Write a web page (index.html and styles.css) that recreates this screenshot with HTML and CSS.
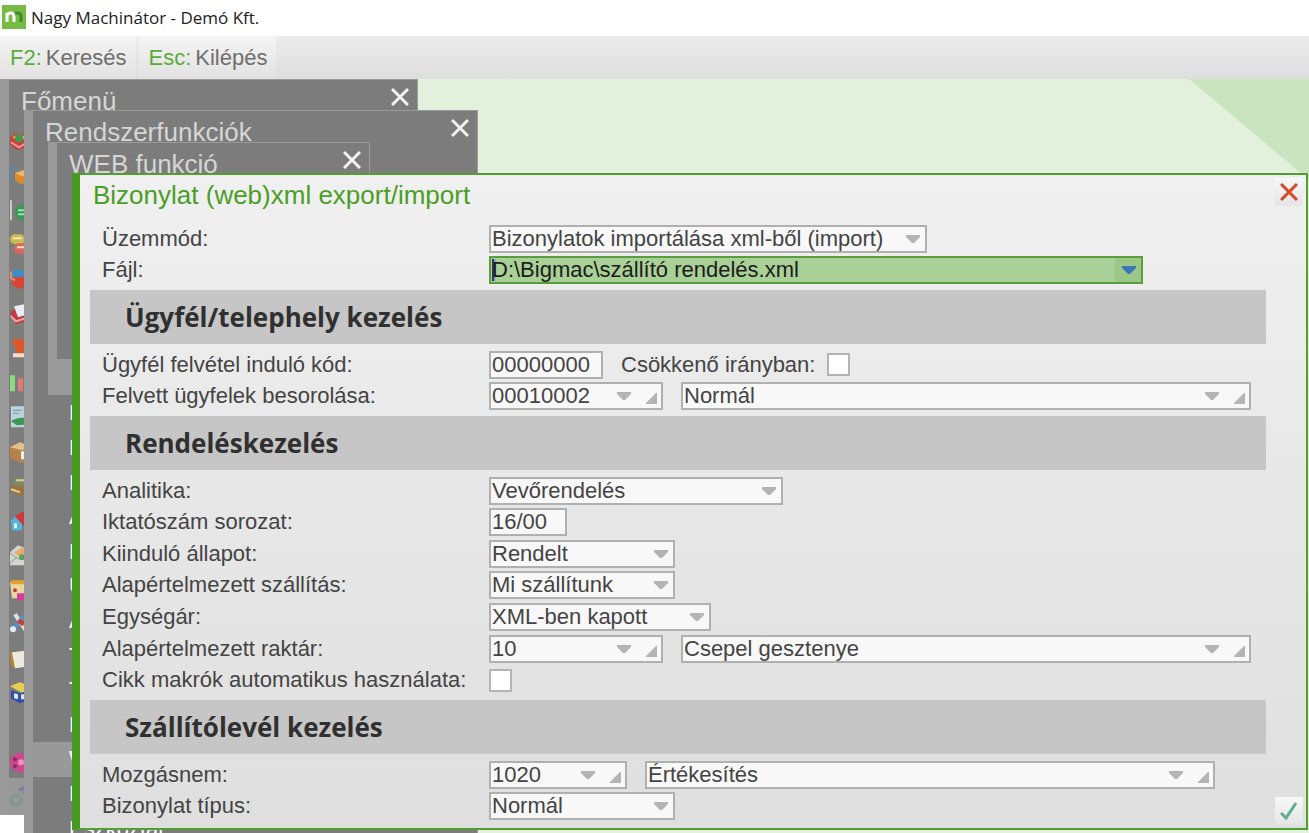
FILE: index.html
```html
<!DOCTYPE html>
<html lang="hu">
<head>
    <meta charset="UTF-8">
    <meta name="viewport" content="width=device-width, initial-scale=1.0">
    <title>Nagy Machinátor - Demó Kft.</title>
    <link rel="stylesheet" href="styles.css">
</head>
<body>
    <header class="titlebar">
        <svg class="logo" viewBox="0 0 24 24" aria-hidden="true">
            <rect width="24" height="24" fill="#76bb43"/>
            <path d="M12 10q1-2 3.500-2 3.500 0 3.500 3.500V17" fill="none" stroke="#3d8a2a" stroke-width="3"/>
            <path d="M5 17V8M5 11.500Q5 8 8.500 8t3.500 3.500V17" fill="none" stroke="#fff" stroke-width="3"/>
        </svg>
        <span>Nagy Machinátor - Demó Kft.</span>
    </header>

    <nav class="toolbar">
        <button type="button"><b>F2:</b> Keresés</button>
        <button type="button"><b>Esc:</b> Kilépés</button>
    </nav>

    <main class="desktop">
        <!-- Main menu -->
        <section class="window main-menu">
            <div class="window-head">
                <h2>Főmenü</h2>
                <button type="button" class="close" aria-label="Bezárás"><svg viewBox="0 0 18 18"><path d="M1 1l16 16M17 1L1 17"/></svg></button>
            </div>
            <div class="icons" aria-hidden="true">
                <svg viewBox="0 0 24 24"><path d="M1 8l6-4 13 2v11l-12 4-7-6z" fill="#c9413b"/><path d="M3 8l7-3 8 3-8 4z" fill="#e8b13c"/><circle cx="10" cy="9" r="4" fill="#3f9b51"/><path d="M2 13l8 5 10-6" stroke="#f0a09a" stroke-width="2" fill="none"/></svg>
                <svg viewBox="0 0 24 24"><path d="M2 3l8 2-3 6 1 8-5-3z" fill="none" stroke="#66879a" stroke-width="2"/><path d="M6 9l9-3 6 3v9l-9 2-6-4z" fill="#dc8b28"/><path d="M6 9l7 3 8-3-7-3z" fill="#f2b75f"/></svg>
                <svg viewBox="0 0 24 24"><path d="M2 2v20" stroke="#ccc" stroke-width="2"/><circle cx="14" cy="14" r="8" fill="#3b9957"/><path d="M9 12h9M9 16h9" stroke="#a2dcb0" stroke-width="2"/></svg>
                <svg viewBox="0 0 24 24"><rect x="1" y="1" width="15" height="10" rx="5" fill="#c7bd50"/><rect x="5" y="10" width="17" height="11" rx="5" fill="#d86662"/><path d="M4 5h9M8 14h9" stroke="#f2e4b0" stroke-width="2"/></svg>
                <svg viewBox="0 0 24 24"><path d="M1 5l9-3 8 3-2 6-13 1z" fill="#3b8fc9"/><path d="M2 10h9l8-2v9l-9 5-7-5z" fill="#d94335"/><path d="M2 4v7l4 2" stroke="#ed8a6b" stroke-width="2" fill="none"/></svg>
                <svg viewBox="0 0 24 24"><path d="M1 10l10-6 11 4v9L7 22z" fill="#c33a44"/><path d="M5 4l10-2 4 10-10 3z" fill="#e8edf5"/><path d="M2 14l5 5 13-4" stroke="#f2a4a0" stroke-width="2" fill="none"/></svg>
                <svg viewBox="0 0 24 24"><path d="M3 3h18v14H8z" fill="#e0562b"/><path d="M4 17h17v4H4z" fill="#f1ded0"/></svg>
                <svg viewBox="0 0 24 24"><rect x="1" y="4" width="5" height="16" fill="#8ddb80"/><rect x="9" y="7" width="5" height="13" fill="#e47878"/></svg>
                <svg viewBox="0 0 24 24"><rect x="2" y="1" width="20" height="21" fill="#bcd3dc"/><path d="M4 5h9M4 8h6" stroke="#7597aa" stroke-width="1"/><path d="M2 16q6-5 18-3v6l-12 1z" fill="#3c9951"/></svg>
                <svg viewBox="0 0 24 24"><path d="M1 7l10-5 11 4v12l-9 5-12-5z" fill="#b58349"/><path d="M1 7l10-5 11 4-9 4z" fill="#e2c08b"/><path d="M12 11h8v8h-8z" fill="#eee"/></svg>
                <svg viewBox="0 0 24 24"><path d="M1 12l12-4 9 5-10 9-10-5z" fill="#9a7440"/><path d="M5 3l14 1-3 8-12-1z" fill="#7b8a68"/><path d="M7 6h8M2 15l9 3" stroke="#e2c98e" stroke-width="2"/></svg>
                <svg viewBox="0 0 24 24"><path d="M2 11l5-4 6 6v8H3z" fill="#55b4dc"/><path d="M6 7l9-5 8 9-9 5z" fill="#d43636"/><path d="M5 14h3v5H5z" fill="#e7f2f7"/></svg>
                <svg viewBox="0 0 24 24"><path d="M1 9l8-7 13 5v15H1z" fill="#d3d6d1"/><path d="M5 9l8-5 7 5-8 6z" fill="#e5ad68"/><path d="M1 10l9 6 10-4M1 20l7-6" stroke="#899c91" fill="none"/><circle cx="13" cy="14" r="3" fill="#5da062"/></svg>
                <svg viewBox="0 0 24 24"><path d="M1 4h18v16H3z" fill="#e8d7a1"/><path d="M2 2h15v4H2z" fill="#e4a32e"/><circle cx="6" cy="12" r="2" fill="#b84335"/><path d="M8 15h12v7H8z" fill="#d9399b"/></svg>
                <svg viewBox="0 0 24 24"><path d="M2 18L17 3" stroke="#4e91cb" stroke-width="5"/><path d="M6 2l12 18" stroke="#d9e2ec" stroke-width="4"/><path d="M9 8l6 4" stroke="#c54234" stroke-width="5"/><circle cx="4" cy="17" r="3" fill="#e8edf2"/></svg>
                <svg viewBox="0 0 24 24"><path d="M1 4l5 2 3 15-7-2z" fill="#b98532"/><path d="M3 5l18-2v16L6 21z" fill="#ece9e0"/></svg>
                <svg viewBox="0 0 24 24"><path d="M1 5l10-4 10 4-7 7z" fill="#e5cf4f"/><path d="M2 9l9 3 10-3v9l-10 4-9-5z" fill="#304fa8"/><path d="M5 12l4 1v5l-4-1zM12 13h4v5h-4z" fill="#dfe4f1"/></svg>
                <span></span>
                <svg viewBox="0 0 24 24"><path d="M1 8l8-6 12 4v11l-9 6-10-5z" fill="#d0478e"/><circle cx="6" cy="9" r="2" fill="#80305c"/><circle cx="12" cy="12" r="3" fill="#f094be"/><circle cx="6" cy="16" r="2" fill="#80305c"/></svg>
                <svg viewBox="0 0 24 24"><circle cx="7" cy="15" r="5" fill="none" stroke="#7c9a8b" stroke-width="3"/><path d="M10 5l6-3v7" stroke="#777d9c" stroke-width="3" fill="none"/></svg>
            </div>
        </section>

        <!-- System functions menu -->
        <section class="window system-menu">
            <div class="window-head">
                <h2>Rendszerfunkciók</h2>
                <button type="button" class="close" aria-label="Bezárás"><svg viewBox="0 0 18 18"><path d="M1 1l16 16M17 1L1 17"/></svg></button>
            </div>
            <ul class="menu">
                <li>B</li>
                <li>F</li>
                <li>F</li>
                <li>A</li>
                <li>E</li>
                <li>U</li>
                <li>A</li>
                <li>T</li>
                <li>T</li>
                <li>E</li>
                <li class="selected">W</li>
                <li>L</li>
                <li>Eszköztár</li>
            </ul>
        </section>

        <!-- Web functions menu -->
        <section class="window web-menu">
            <div class="window-head">
                <h2>WEB funkció</h2>
                <button type="button" class="close" aria-label="Bezárás"><svg viewBox="0 0 18 18"><path d="M1 1l16 16M17 1L1 17"/></svg></button>
            </div>
        </section>

        <!-- Export/import dialog -->
        <form class="dialog">
            <h1>Bizonylat (web)xml export/import</h1>
            <button type="button" class="corner cancel" aria-label="Mégse"><svg viewBox="0 0 18 18"><path d="M1 1l16 16M17 1L1 17"/></svg></button>

            <div class="row">
                <label for="mode">Üzemmód:</label>
                <select id="mode" class="w-mode"><option>Bizonylatok importálása xml-ből (import)</option></select>
            </div>
            <div class="row">
                <label for="file">Fájl:</label>
                <select id="file" class="w-file active"><option>D:\Bigmac\szállító rendelés.xml</option></select>
            </div>

            <h3>Ügyfél/telephely kezelés</h3>
            <div class="row">
                <label for="startCode">Ügyfél felvétel induló kód:</label>
                <input type="text" id="startCode" class="w-code" value="00000000">
                <div class="check">
                    <label for="descending">Csökkenő irányban:</label>
                    <input type="checkbox" id="descending">
                </div>
            </div>
            <div class="row">
                <label for="clientClass">Felvett ügyfelek besorolása:</label>
                <select id="clientClass" class="w-lookup lookup"><option>00010002</option></select>
                <select class="w-name lookup" aria-label="Besorolás neve"><option>Normál</option></select>
            </div>

            <h3>Rendeléskezelés</h3>
            <div class="row">
                <label for="analytics">Analitika:</label>
                <select id="analytics" class="w-analytics"><option>Vevőrendelés</option></select>
            </div>
            <div class="row">
                <label for="series">Iktatószám sorozat:</label>
                <input type="text" id="series" class="w-series" value="16/00">
            </div>
            <div class="row">
                <label for="state">Kiinduló állapot:</label>
                <select id="state" class="w-short"><option>Rendelt</option></select>
            </div>
            <div class="row">
                <label for="delivery">Alapértelmezett szállítás:</label>
                <select id="delivery" class="w-short"><option>Mi szállítunk</option></select>
            </div>
            <div class="row">
                <label for="price">Egységár:</label>
                <select id="price" class="w-price"><option>XML-ben kapott</option></select>
            </div>
            <div class="row">
                <label for="store">Alapértelmezett raktár:</label>
                <select id="store" class="w-lookup lookup"><option>10</option></select>
                <select class="w-name lookup" aria-label="Raktár neve"><option>Csepel gesztenye</option></select>
            </div>
            <div class="row">
                <label for="macros">Cikk makrók automatikus használata:</label>
                <input type="checkbox" id="macros">
            </div>

            <h3>Szállítólevél kezelés</h3>
            <div class="row">
                <label for="movement">Mozgásnem:</label>
                <select id="movement" class="w-movement lookup"><option>1020</option></select>
                <select class="w-name lookup" aria-label="Mozgásnem neve"><option>Értékesítés</option></select>
            </div>
            <div class="row">
                <label for="docType">Bizonylat típus:</label>
                <select id="docType" class="w-short"><option>Normál</option></select>
            </div>

            <button type="submit" class="corner accept" aria-label="Rendben"><svg viewBox="0 0 18 18"><path d="M1 11l5 5L16 1"/></svg></button>
        </form>
    </main>
</body>
</html>
```

FILE: styles.css
```css
* {
    box-sizing: border-box;
}
body {
    margin: 0;
    height: 100vh;
    display: flex;
    flex-direction: column;
    overflow: hidden;
    font-family: "Liberation Sans", Arial, sans-serif;
    font-size: 22px;
    color: #444;
    background-color: #fff;
}
button, input, select {
    font: inherit;
    color: inherit;
    margin: 0;
    border-radius: 0;
}
h1, h2, h3, ul {
    margin: 0;
    padding: 0;
    font-weight: normal;
}

/* Title bar and toolbar */
.titlebar {
    height: 36px;
    display: flex;
    align-items: center;
    gap: 5px;
    padding: 0 2px 2px;
    font-family: "Open Sans", "Noto Sans", sans-serif;
    font-size: 17px;
    color: #222;
}
.logo {
    width: 24px;
    height: 24px;
}
.toolbar {
    height: 43px;
    display: flex;
    gap: 3px;
    background: linear-gradient(#ececec, #dedede);
}
.toolbar button {
    display: flex;
    align-items: center;
    gap: 4px;
    border: none;
    padding: 0 9px 0 10px;
    background: linear-gradient(#f4f4f4, #e2e2e2);
    color: #6e6e6e;
    white-space: nowrap;
}
.toolbar b {
    font-weight: normal;
    color: #5bab3a;
}

/* Desktop with the stacked windows */
.desktop {
    flex: 1;
    position: relative;
    overflow: hidden;
    background-color: #e2f0dc;
}
.desktop::before {
    content: "";
    position: absolute;
    top: 0;
    right: 0;
    width: 120px;
    height: 101px;
    background-color: #cbe4c0;
    clip-path: polygon(0 0, 100% 0, 100% 100%);
}
.window {
    position: absolute;
    display: flex;
    flex-direction: column;
    background-color: #7c7c7c;
    border: 1px solid #9a9a9a;
    border-left: 9px solid #9a9a9a;
}
.window-head {
    display: flex;
    justify-content: space-between;
    align-items: center;
    height: 36px;
    padding: 6px 8px 0 12px;
}
.window-head h2 {
    font-size: 26px;
    line-height: 30px;
    color: #d6d6d6;
}
.close {
    border: none;
    padding: 0;
    background: none;
    display: flex;
    height: 26px;
}
.close svg, .corner svg {
    width: 18px;
    height: 18px;
    fill: none;
    stroke: #f2f2f2;
    stroke-width: 3;
}
.main-menu {
    left: 0;
    top: 0;
    bottom: 18px;
    width: 418px;
    background: linear-gradient(#999, #999) bottom / 100% 36px no-repeat #7c7c7c;
    box-shadow: 0 18px #fff;
}
.system-menu {
    left: 24px;
    top: 31px;
    bottom: -14px;
    width: 454px;
}
.web-menu {
    left: 48px;
    top: 63px;
    width: 322px;
    height: 253px;
    border-bottom-width: 36px;
}
.icons {
    flex: 1;
    display: flex;
    flex-direction: column;
    padding-top: 8px;
}
.icons svg, .icons span {
    flex: 1;
    min-height: 0;
    width: 24px;
}
.menu {
    flex: 1;
    display: flex;
    flex-direction: column;
    margin-top: 249px;
    list-style: none;
    color: #fff;
}
.menu li {
    flex: 1;
    display: flex;
    align-items: center;
    padding-left: 36px;
}
.menu .selected {
    background-color: #999;
}

/* Dialog */
.dialog {
    position: absolute;
    left: 72px;
    right: 1px;
    top: 94px;
    bottom: 3px;
    display: flex;
    flex-direction: column;
    padding: 0 40px 6px 10px;
    background: linear-gradient(#f0f0f0, #dfdfdf);
    border: 2px solid #519f2f;
    border-left: 8px solid #469b1e;
}
.dialog h1 {
    height: 48px;
    padding-left: 3px;
    font-size: 26px;
    line-height: 40px;
    color: #4a9e25;
}
.dialog h3 {
    flex: none;
    height: 54px;
    margin: 4px 0 5px;
    padding-left: 35px;
    background-color: #c6c6c6;
    font-family: "Open Sans", "Noto Sans", sans-serif;
    font-size: 26px;
    font-weight: bold;
    line-height: 54px;
    color: #303030;
}
.row {
    flex: 1;
    display: flex;
    align-items: center;
    gap: 18px;
    padding-left: 12px;
    white-space: nowrap;
}
.row > label {
    flex: none;
    width: 369px;
}
.check {
    display: flex;
    align-items: center;
    gap: 12px;
}
select, input[type="text"] {
    height: 28px;
    min-width: 0;
    padding: 0 1px;
    border: 2px solid #b0b0b0;
    background-color: #f8f8f8;
    line-height: 24px;
}
select {
    appearance: none;
    background-image: url("data:image/svg+xml,%3Csvg xmlns='http://www.w3.org/2000/svg' width='14' height='8'%3E%3Cpath d='M0 0h14v2L8 8H6L0 2z' fill='%23b4b4b4'/%3E%3C/svg%3E");
    background-repeat: no-repeat;
    background-position: right 5px center;
}
.lookup {
    background-image:
        url("data:image/svg+xml,%3Csvg xmlns='http://www.w3.org/2000/svg' width='14' height='8'%3E%3Cpath d='M0 0h14v2L8 8H6L0 2z' fill='%23b4b4b4'/%3E%3C/svg%3E"),
        url("data:image/svg+xml,%3Csvg xmlns='http://www.w3.org/2000/svg' width='11' height='11'%3E%3Cpath d='M11 0v11H0v-1L10 0z' fill='%23b4b4b4'/%3E%3C/svg%3E");
    background-position: right 30px center, right 4px bottom 4px;
}
.active {
    border-color: #599d3c;
    background-color: #a9d097;
    color: #1c1c1c;
    background-image:
        url("data:image/svg+xml,%3Csvg xmlns='http://www.w3.org/2000/svg' width='14' height='8'%3E%3Cpath d='M0 0h14v2L8 8H6L0 2z' fill='%233a76b8'/%3E%3C/svg%3E"),
        linear-gradient(#9bc886, #9bc886),
        linear-gradient(90deg, #333a50 2px, #7fa9e0 2px);
    background-size: 14px 8px, 26px 100%, 4px 22px;
    background-position: right 5px center, right top, 1px center;
}
input[type="checkbox"] {
    appearance: none;
    width: 23px;
    height: 23px;
    background-color: #fff;
    border: 2px solid #b4b4b4;
}
input[type="checkbox"]:checked {
    background-color: #a9d097;
}
.w-mode {
    width: 438px;
}
.w-file {
    width: 654px;
}
.w-code {
    width: 114px;
}
.w-lookup {
    width: 174px;
}
.w-name {
    width: 570px;
}
.w-analytics {
    width: 294px;
}
.w-series {
    width: 78px;
}
.w-short {
    width: 186px;
}
.w-price {
    width: 222px;
}
.w-movement {
    width: 138px;
}

/* Buttons in the right corners of the dialog */
.corner {
    position: absolute;
    right: 3px;
    width: 28px;
    height: 28px;
    padding: 0;
    border: none;
    display: flex;
    align-items: center;
    justify-content: center;
    background: linear-gradient(#f8f8f8, #e4e4e4);
}
.cancel {
    top: 3px;
}
.cancel svg {
    stroke: #d8452b;
}
.accept {
    bottom: 3px;
}
.accept svg {
    stroke: #5fae90;
}
```
